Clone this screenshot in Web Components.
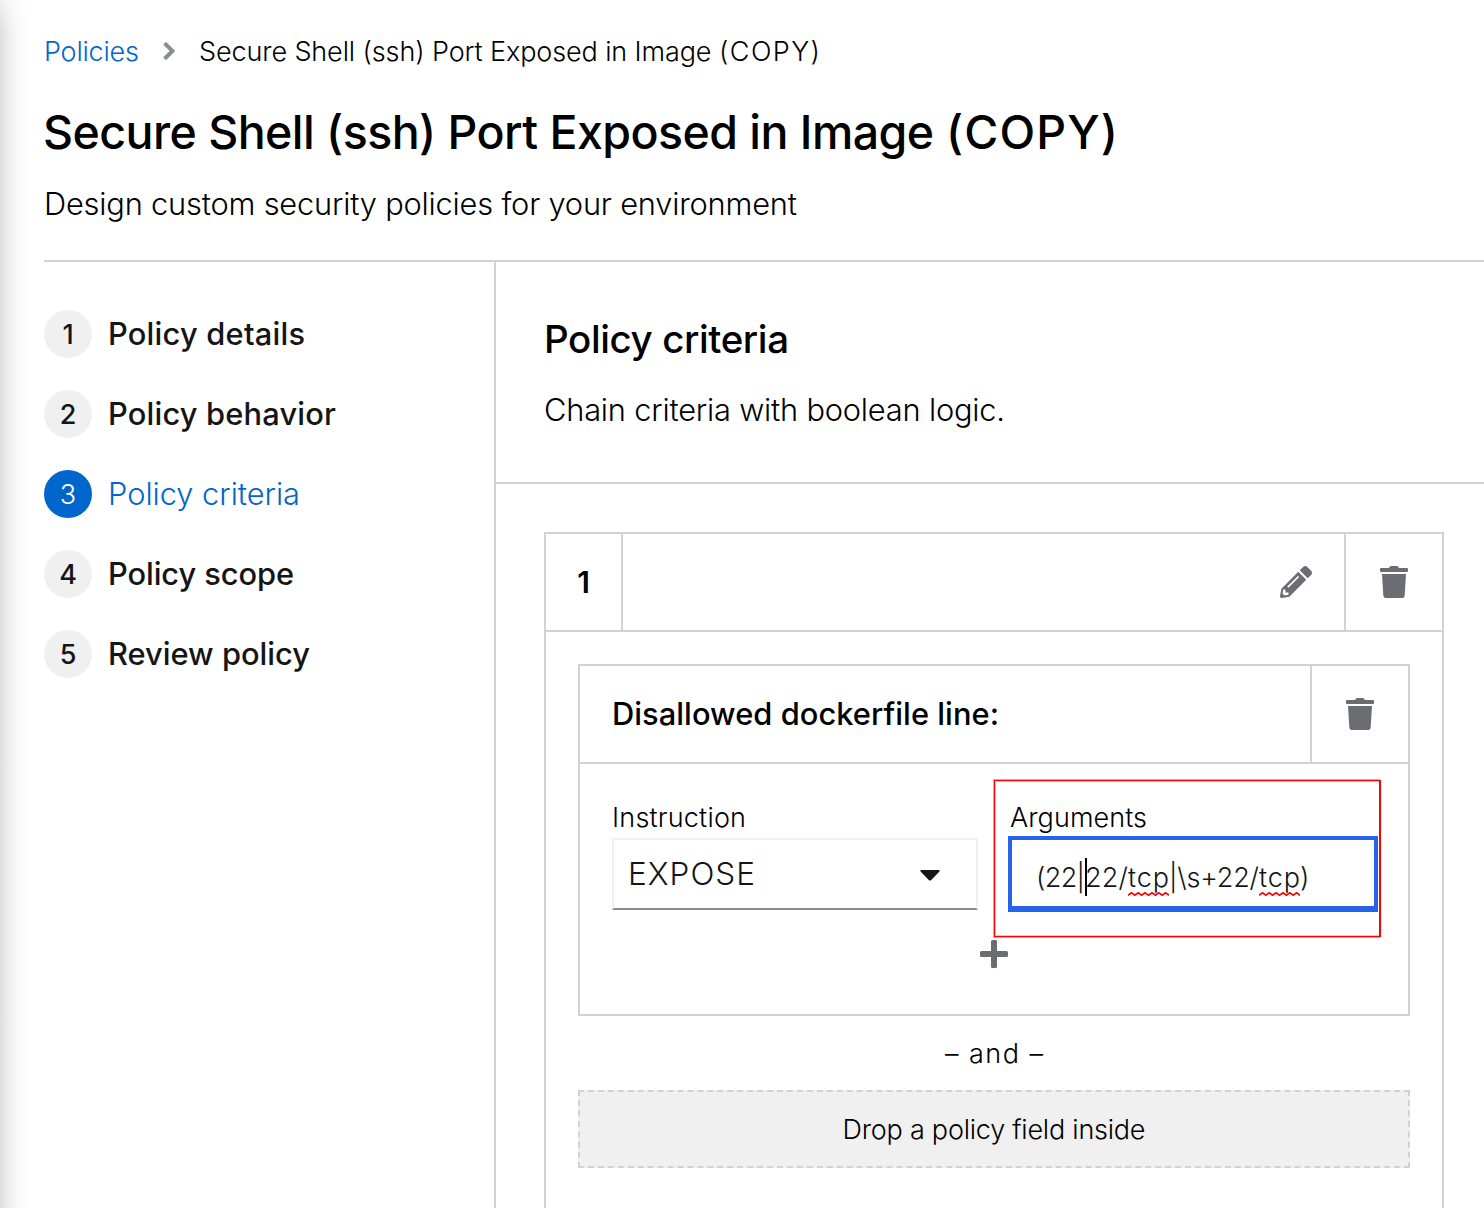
<!DOCTYPE html>
<html lang="en">
<head>
<meta charset="utf-8">
<title>Policies</title>
<style>
body{margin:0;background:#fff;font-family:Inter,"Open Sans",sans-serif;font-weight:300;color:#000}
</style>
</head>
<body>
<policy-page></policy-page>
<script>
const define = (name, html, setup) => customElements.define(name, class extends HTMLElement {
  connectedCallback() {
    if (this.shadowRoot) return;
    const t = document.createElement('template');
    t.innerHTML = html;
    this.attachShadow({ mode: 'open' }).append(t.content.cloneNode(true));
    if (setup) setup(this, this.shadowRoot);
  }
});

// A single line of text, tracked so that it spans the width given in "w".
define('fit-text', `<style>:host{display:block;white-space:pre}span{display:inline-block;white-space:pre}</style><span><slot></slot></span>`, (el, root) => {
  const span = root.querySelector('span');
  const n = el.textContent.length;
  const target = parseFloat(el.getAttribute('w'));
  el.style.width = target + 'px';
  if (n > 1) span.style.letterSpacing = ((target - span.getBoundingClientRect().width) / (n - 1)).toFixed(3) + 'px';
});

const ICONS = {
  trash: ['0 0 28 32', '<path d="M1 2H9L9.8.7Q10.200 0 11 0H17Q17.800 0 18.200.7L19 2H27Q28 2 28 3V5Q28 6 27 6H1Q0 6 0 5V3Q0 2 1 2ZM2 8H26L24.700 29.200Q24.500 32 21.700 32H6.300Q3.500 32 3.300 29.200Z"/>'],
  pencil: ['0 0 512 512', '<path d="M497.900 142.100l-46.100 46.100c-4.700 4.700-12.300 4.700-17 0l-111-111c-4.700-4.700-4.700-12.300 0-17l46.100-46.100c18.700-18.700 49.100-18.700 67.900 0l60.100 60.100c18.800 18.700 18.800 49.100 0 67.900zM284.200 99.800L21.600 362.400.4 483.900c-2.900 16.400 11.400 30.600 27.800 27.800l121.500-21.300 262.600-262.600c4.700-4.700 4.700-12.300 0-17l-111-111c-4.800-4.700-12.400-4.700-17.100 0zM124.100 339.900c-5.500-5.500-5.500-14.300 0-19.800l154-154c5.500-5.500 14.300-5.500 19.800 0s5.500 14.300 0 19.800l-154 154c-5.500 5.500-14.300 5.500-19.800 0zM88 424h48v36.300l-64.500 11.300-31.100-31.100L51.700 376H88v48z"/>'],
  plus: ['0 0 28 28', '<path d="M12.500 0h3Q17 0 17 1.500V11h9.500Q28 11 28 12.500v3Q28 17 26.500 17H17v9.500Q17 28 15.500 28h-3Q11 28 11 26.500V17H1.500Q0 17 0 15.500v-3Q0 11 1.500 11H11V1.500Q11 0 12.500 0Z"/>'],
  chevron: ['0 0 12 18', '<path d="M11.600 9.700 3.700 17.600Q3 18.200 2.300 17.600L.8 16.200Q.2 15.500.8 14.800L6.600 9 .8 3.200Q.2 2.500.8 1.800L2.300.4Q3-.2 3.700.4L11.600 8.300Q12.200 9 11.600 9.700Z"/>'],
  caret: ['0 0 20 11', '<path d="M1.500 0H18.500Q20 0 19.600 1.200L19.200 1.800 11 10.200Q10 11 9 10.200L.8 1.800.4 1.200Q0 0 1.500 0Z"/>']
};
define('ui-icon', `<style>:host{display:block;flex:none}svg{display:block;width:100%;height:100%;fill:currentColor}</style><svg></svg>`, (el, root) => {
  const [box, path] = ICONS[el.getAttribute('name')];
  const svg = root.querySelector('svg');
  svg.setAttribute('viewBox', box);
  svg.innerHTML = path;
});

define('page-header', `<style>
:host{display:block;box-sizing:border-box;height:262px;margin-left:44px;padding-top:35px;border-bottom:2px solid #d2d2d2}
nav{display:flex;align-items:center;height:34px;font-size:27px;line-height:34px}
.link{color:#06c}
ui-icon{width:12px;height:18px;margin:-2px 24px 0 24px;color:#8a8d90}
h1{display:flex;margin:32px 0 0 -1px;font-size:46.500px;line-height:62px;font-weight:500}
p{margin:21px 0 0;font-size:30.800px;line-height:40px}
</style>
<nav><fit-text class="link" w="95">Policies</fit-text><ui-icon name="chevron"></ui-icon><fit-text w="520">Secure Shell (ssh) Port Exposed in Image </fit-text><fit-text w="101">(COPY)</fit-text></nav>
<h1><fit-text w="903">Secure Shell (ssh) Port Exposed in Image </fit-text><fit-text w="172">(COPY)</fit-text></h1>
<p><fit-text w="753">Design custom security policies for your environment</fit-text></p>`);

define('wizard-step', `<style>
:host{display:flex;align-items:center;gap:16px;height:48px;color:#151515;font-weight:500}
.n{box-sizing:border-box;width:48px;height:48px;padding-top:2px;border-radius:50%;background:#f0f0f0;display:flex;align-items:center;justify-content:center;font-size:27px;line-height:46px}
.t{font-size:30.800px;line-height:48px}
:host([current]){color:#06c;font-weight:300}
:host([current]) .n{background:#06c;color:#fff}
</style><span class="n"></span><span class="t"><slot></slot></span>`, (el, root) => { root.querySelector('.n').textContent = el.getAttribute('n'); });

define('wizard-nav', `<style>
:host{display:flex;flex-direction:column;gap:32px;box-sizing:border-box;width:452px;padding-top:48px;border-right:2px solid #d2d2d2;flex:none}
</style>
<wizard-step n="1"><fit-text w="197">Policy details</fit-text></wizard-step>
<wizard-step n="2"><fit-text w="228">Policy behavior</fit-text></wizard-step>
<wizard-step n="3" current><fit-text w="192">Policy criteria</fit-text></wizard-step>
<wizard-step n="4"><fit-text w="186">Policy scope</fit-text></wizard-step>
<wizard-step n="5"><fit-text w="202">Review policy</fit-text></wizard-step>`);

define('select-field', `<style>
:host{display:block;width:366px}
label{display:block;padding-top:1px;font-size:27px;line-height:34px}
.box{display:flex;align-items:center;justify-content:space-between;box-sizing:border-box;height:72px;margin-top:3px;padding:0 36px 0 14px;border:2px solid #f0f0f0;border-bottom-color:#8a8d90;color:#151515;font-size:31.500px;line-height:40px}
ui-icon{width:20px;height:11px;margin-top:3px}
</style><label><fit-text w="134">Instruction</fit-text></label><div class="box"><fit-text w="127">EXPOSE</fit-text><ui-icon name="caret"></ui-icon></div>`);

define('arguments-field', `<style>
:host{display:block;position:relative;width:370px}
label{display:block;padding:1px 0 0 2px;font-size:27px;line-height:34px}
.box{display:flex;align-items:center;box-sizing:border-box;height:76px;margin-top:1px;padding:9px 0 0 24px;border:4px solid #2563eb;border-bottom-width:6px;color:#151515;font-size:27px;line-height:34px}
.text{display:flex}
.wavy{display:flex;position:relative}
.wavy svg{position:absolute;left:0;bottom:-1px;width:41px;height:4px}
.caret{position:absolute;left:77px;top:58px;width:2px;height:38px;background:#000}
.mark{position:absolute;left:-14px;top:-20px;width:387px;height:157px;border:1px solid #f00;border-right-width:2px;box-shadow:-1px -1px 0 #f99,-1px 1px 0 #f99,inset 1px 1px 0 #fbb,inset 1px -1px 0 #fbb;box-sizing:border-box}
</style><label><fit-text w="137">Arguments</fit-text></label>
<div class="box"><div class="text"><fit-text w="49">(22|</fit-text><fit-text w="43">22/</fit-text><span class="wavy"><fit-text w="41">tcp</fit-text><svg viewBox="0 0 41 4"><path d="M0 3.200L3.400.8 6.800 3.200 10.200.8 13.600 3.200 17 .8 20.500 3.200 24 .8 27.400 3.200 30.800.8 34.200 3.200 37.600.8 41 3.200" fill="none" stroke="#f00" stroke-width="1.700"/></svg></span><fit-text w="90">|\\s+22/</fit-text><span class="wavy"><fit-text w="41">tcp</fit-text><svg viewBox="0 0 41 4"><path d="M0 3.200L3.400.8 6.800 3.200 10.200.8 13.600 3.200 17 .8 20.500 3.200 24 .8 27.400 3.200 30.800.8 34.200 3.200 37.600.8 41 3.200" fill="none" stroke="#f00" stroke-width="1.700"/></svg></span><fit-text w="10">)</fit-text></div></div><span class="caret"></span><span class="mark"></span>`);

define('policy-field-card', `<style>
:host{display:block;box-sizing:border-box;height:352px;border:2px solid #d2d2d2}
header{display:flex;height:96px;border-bottom:2px solid #d2d2d2}
.name{flex:1;padding-left:32px;font-size:30.800px;line-height:96px;font-weight:500}
.del{display:flex;align-items:center;justify-content:center;width:96px;border-left:2px solid #d2d2d2;color:#6a6e73}
.del ui-icon{width:28px;height:32px}
.fields{display:flex;gap:30px;height:112px;padding:36px 0 0 32px}
.add{display:flex;justify-content:center;padding-top:28px;color:#6a6e73}
.add ui-icon{width:28px;height:28px}
</style>
<header><div class="name"><fit-text w="387">Disallowed dockerfile line:</fit-text></div><div class="del"><ui-icon name="trash"></ui-icon></div></header>
<div class="fields"><select-field></select-field><arguments-field></arguments-field></div>
<div class="add"><ui-icon name="plus"></ui-icon></div>`);

define('policy-section', `<style>
:host{display:block;box-sizing:border-box;width:900px;height:740px;border:2px solid #d2d2d2}
header{display:flex;height:96px;border-bottom:2px solid #d2d2d2;color:#6a6e73}
.n{width:75px;border-right:2px solid #d2d2d2;color:#000;text-align:center;font-size:30px;line-height:96px;font-weight:600}
.edit{flex:1;display:flex;align-items:center;justify-content:flex-end;padding-right:32px}
.edit ui-icon{width:32px;height:32px}
.del{display:flex;align-items:center;justify-content:center;width:96px;border-left:2px solid #d2d2d2}
.del ui-icon{width:28px;height:32px}
.body{padding:32px 32px 0}
.and{display:flex;justify-content:center;align-items:center;box-sizing:border-box;height:74px;padding-top:2px;font-size:27px;line-height:34px}
.drop{display:flex;justify-content:center;align-items:center;box-sizing:border-box;height:78px;padding-top:2px;border:2px dashed #d2d2d2;background:#f0f0f0;font-size:27px;line-height:34px}
</style>
<header><div class="n">1</div><div class="edit"><ui-icon name="pencil"></ui-icon></div><div class="del"><ui-icon name="trash"></ui-icon></div></header>
<div class="body"><policy-field-card></policy-field-card><div class="and"><fit-text w="98">– and –</fit-text></div><div class="drop"><fit-text w="303">Drop a policy field inside</fit-text></div></div>`);

define('criteria-panel', `<style>
:host{display:block;flex:1;min-width:0}
.intro{box-sizing:border-box;height:222px;padding:51px 0 0 48px;border-bottom:2px solid #d2d2d2}
h2{margin:0;font-size:38.500px;line-height:52px;font-weight:500}
p{margin:25px 0 0;font-size:30.800px;line-height:40px}
.builder{padding:48px 0 0 48px}
</style>
<div class="intro"><h2><fit-text w="245">Policy criteria</fit-text></h2><p><fit-text w="461">Chain criteria with boolean logic.</fit-text></p></div>
<div class="builder"><policy-section></policy-section></div>`);

define('policy-page', `<style>
:host{display:block;width:1484px;height:1208px;overflow:hidden;background:linear-gradient(180deg,rgba(255,255,255,.55),rgba(255,255,255,0) 34px),linear-gradient(90deg,#dedede 0,#ebebeb 7px,#f6f6f6 15px,#fcfcfc 23px,#fff 31px)}
main{display:flex;height:946px;padding-left:44px}
</style><page-header></page-header><main><wizard-nav></wizard-nav><criteria-panel></criteria-panel></main>`);
</script>
</body>
</html>
